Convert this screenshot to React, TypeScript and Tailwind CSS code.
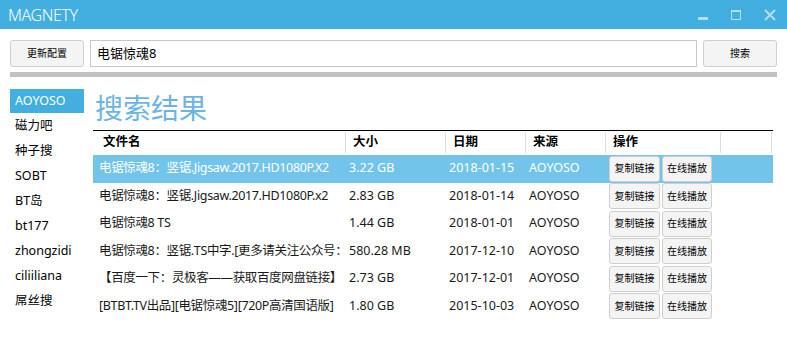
import type React from "react"

const sites = ["AOYOSO", "磁力吧", "种子搜", "SOBT", "BT岛", "bt177", "zhongzidi", "ciliiliana", "屌丝搜"]

const rows = [
  { name: "电锯惊魂8：竖锯.Jigsaw.2017.HD1080P.X2", size: "3.22 GB", date: "2018-01-15", src: "AOYOSO" },
  { name: "电锯惊魂8：竖锯.Jigsaw.2017.HD1080P.x2", size: "2.83 GB", date: "2018-01-14", src: "AOYOSO" },
  { name: "电锯惊魂8 TS", size: "1.44 GB", date: "2018-01-01", src: "AOYOSO" },
  { name: "电锯惊魂8：竖锯.TS中字.[更多请关注公众号：", size: "580.28 MB", date: "2017-12-10", src: "AOYOSO" },
  { name: "【百度一下：灵极客——获取百度网盘链接】", size: "2.73 GB", date: "2017-12-01", src: "AOYOSO" },
  { name: "[BTBT.TV出品][电锯惊魂5][720P高清国语版]", size: "1.80 GB", date: "2015-10-03", src: "AOYOSO" },
]

const headers = [
  { label: "文件名", w: "w-[253px]", pl: "pl-[10px]" },
  { label: "大小", w: "w-[100px]", pl: "pl-[7px]" },
  { label: "日期", w: "w-[80px]", pl: "pl-[7px]" },
  { label: "来源", w: "w-[80px]", pl: "pl-[7px]" },
  { label: "操作", w: "w-[115px]", pl: "pl-[7px]" },
  { label: "", w: "w-[51px]", pl: "" },
]

const SmallButton: React.FC<{ label: string; className?: string }> = ({ label, className }) => (
  <button className={`h-[26px] rounded-[3px] border border-[#cfcfcf] bg-[#f4f4f4] text-[10px] text-black ${className ?? ""}`}>
    {label}
  </button>
)

export default function App() {
  return (
    <div className="w-[787px] h-[350px] bg-white overflow-hidden font-['Noto_Sans','Noto_Sans_CJK_SC',sans-serif] text-[12.5px] text-[#1a1a1a]">
      {/* title bar */}
      <div className="h-[29px] bg-[#42afe0] flex items-center justify-between pl-[8px]">
        <span className="text-white text-[16px] font-light tracking-[-0.4px]">MAGNETY</span>
        <div className="flex items-center h-full">
          <div className="w-[10px] h-[3px] bg-[#b3ddf4] mt-[7px] mr-[23px]" />
          <div className="w-[10px] h-[10px] border border-t-2 border-[#b3ddf4] mr-[23px]" />
          <svg width="12" height="12" viewBox="0 0 12 12" className="mr-[11px]">
            <path d="M1 1L11 11M11 1L1 11" stroke="#b3ddf4" strokeWidth="2" />
          </svg>
        </div>
      </div>

      {/* toolbar */}
      <div className="flex items-center gap-[6px] px-[10px] pt-[11px]">
        <SmallButton label="更新配置" className="w-[74px] h-[27px]" />
        <div className="flex-1 h-[27px] border border-[#c8c8c8] flex items-center pl-[6px] text-[13px] text-black">
          电锯惊魂8
        </div>
        <SmallButton label="搜索" className="w-[74px] h-[27px]" />
      </div>
      <div className="mx-[10px] mt-[5px] h-[5px] bg-[#c2c2c2]" />

      {/* body */}
      <div className="flex pt-[12px]">
        <div className="ml-[10px] w-[74px] flex flex-col">
          {sites.map((s, i) => (
            <div
              key={s}
              className={`flex items-center pl-[5px] ${i === 0 ? "h-[24px] bg-[#42afe0] text-white mb-[1px]" : "h-[25px] text-black"}`}
            >
              {s}
            </div>
          ))}
        </div>

        <div className="ml-[9px] w-[680px]">
          <div className="h-[41px] pl-[2px] text-[28px] leading-[38px] text-[#6cb4e4]">搜索结果</div>
          <div className="border-t border-black">
            <div className="flex h-[23px]">
              {headers.map((h, i) => (
                <div
                  key={i}
                  className={`${h.w} ${h.pl} flex items-center font-bold text-black border-r border-[#dcdcdc] my-[1px] shrink-0`}
                >
                  {h.label}
                </div>
              ))}
            </div>
            <div className="mt-[1px]">
              {rows.map((r, i) => {
                const sel = i === 0
                return (
                  <div
                    key={i}
                    className={`flex items-center h-[27.5px] ${sel ? "bg-[#72c4ea] text-white" : "text-[#1a1a1a]"}`}
                  >
                    <div className="w-[253px] shrink-0 pl-[6px] pr-[6px]">
                      <div className="overflow-hidden whitespace-nowrap tracking-[-0.35px]">{r.name}</div>
                    </div>
                    <div className="w-[100px] shrink-0 pl-[3px] whitespace-nowrap">{r.size}</div>
                    <div className="w-[80px] shrink-0 pl-[3px]">{r.date}</div>
                    <div className="w-[80px] shrink-0 pl-[3px]">{r.src}</div>
                    <div className="w-[115px] shrink-0 pl-[3px] flex gap-[2px]">
                      <SmallButton label="复制链接" className="w-[51px]" />
                      <SmallButton label="在线播放" className="w-[50px]" />
                    </div>
                  </div>
                )
              })}
            </div>
          </div>
        </div>
      </div>
    </div>
  )
}
